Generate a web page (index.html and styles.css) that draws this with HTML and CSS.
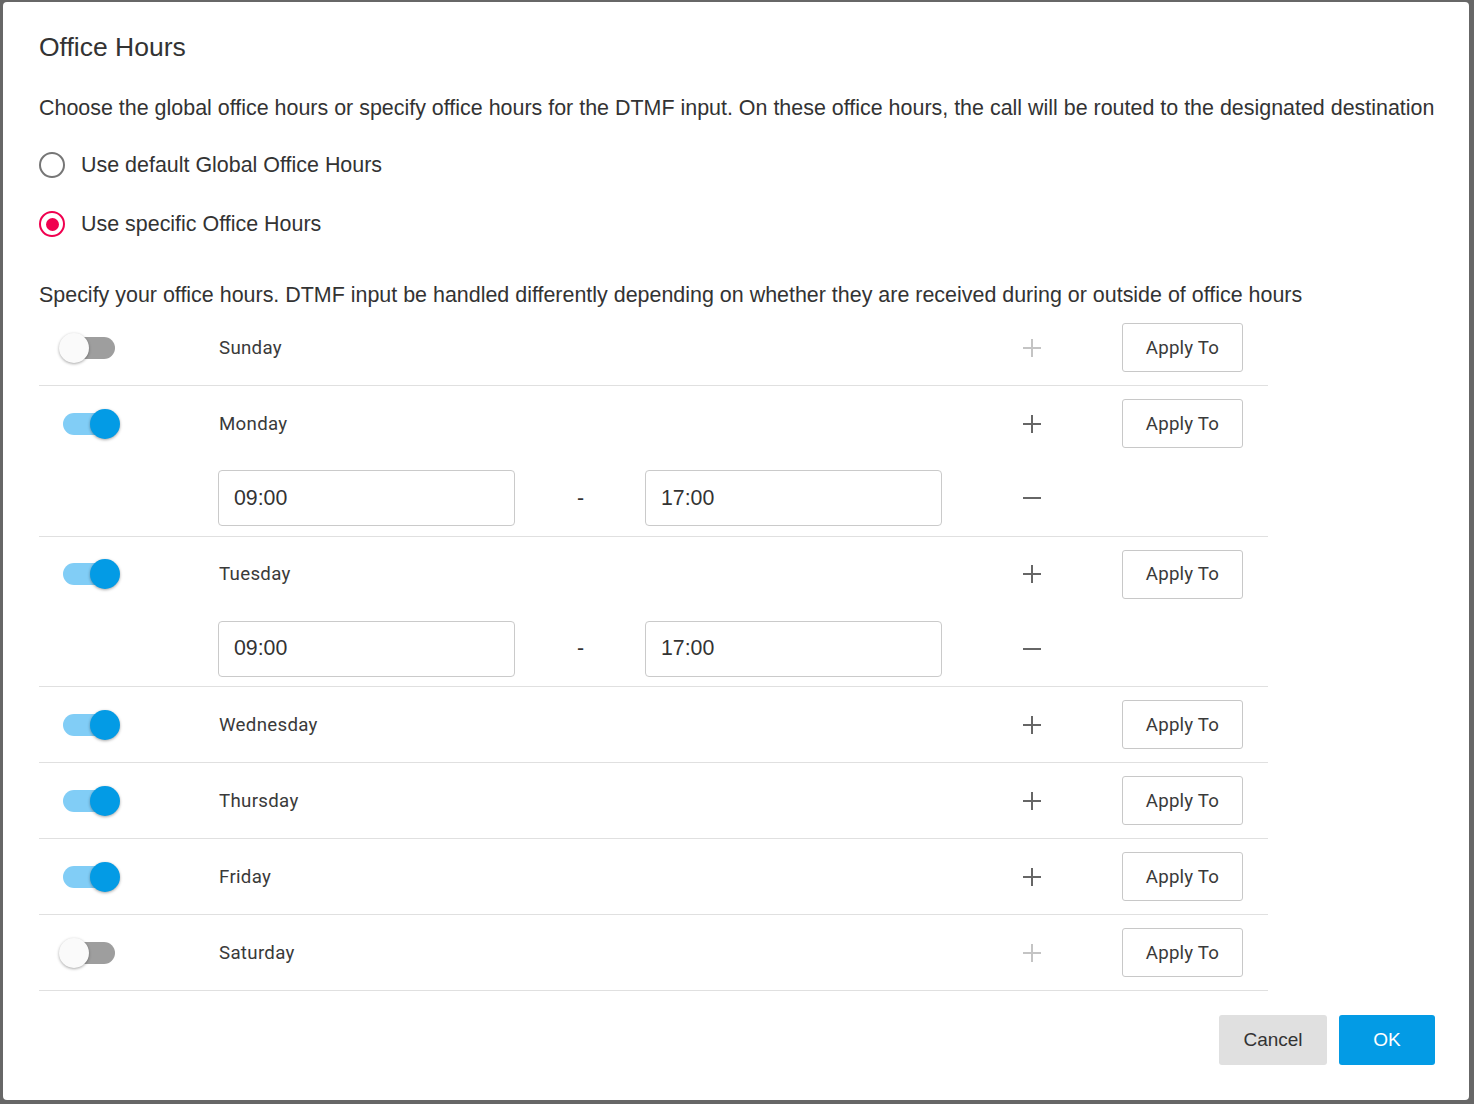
FILE: index.html
```html
<!DOCTYPE html>
<html>
<head>
<meta charset="utf-8">
<title>Office Hours</title>
<link rel="stylesheet" href="styles.css">
</head>
<body>
<div class="dialog">
  <h1 class="title">Office Hours</h1>
  <p class="desc">Choose the global office hours or specify office hours for the DTMF input. On these office hours, the call will be routed to the designated destination</p>
  <div class="radios">
    <label class="radio"><span class="radio-circle"></span><span>Use default Global Office Hours</span></label>
    <label class="radio checked"><span class="radio-circle"></span><span>Use specific Office Hours</span></label>
  </div>
  <p class="desc specify">Specify your office hours. DTMF input be handled differently depending on whether they are received during or outside of office hours</p>

  <div class="days">
    <div class="day">
      <div class="day-row">
        <span class="toggle"><span class="thumb"></span></span>
        <span class="day-name">Sunday</span>
        <span class="icon-cell"><svg class="plus disabled" viewBox="0 0 20 20"><path d="M10 1v18M1 10h18"/></svg></span>
        <button class="apply">Apply To</button>
      </div>
    </div>
    <div class="day">
      <div class="day-row">
        <span class="toggle on"><span class="thumb"></span></span>
        <span class="day-name">Monday</span>
        <span class="icon-cell"><svg class="plus" viewBox="0 0 20 20"><path d="M10 1v18M1 10h18"/></svg></span>
        <button class="apply">Apply To</button>
      </div>
      <div class="time-row">
        <input class="time" value="09:00">
        <span class="dash">-</span>
        <input class="time" value="17:00">
        <span class="icon-cell"><svg class="plus" viewBox="0 0 20 20"><path d="M1 10h18"/></svg></span>
      </div>
    </div>
    <div class="day">
      <div class="day-row">
        <span class="toggle on"><span class="thumb"></span></span>
        <span class="day-name">Tuesday</span>
        <span class="icon-cell"><svg class="plus" viewBox="0 0 20 20"><path d="M10 1v18M1 10h18"/></svg></span>
        <button class="apply">Apply To</button>
      </div>
      <div class="time-row">
        <input class="time" value="09:00">
        <span class="dash">-</span>
        <input class="time" value="17:00">
        <span class="icon-cell"><svg class="plus" viewBox="0 0 20 20"><path d="M1 10h18"/></svg></span>
      </div>
    </div>
    <div class="day">
      <div class="day-row">
        <span class="toggle on"><span class="thumb"></span></span>
        <span class="day-name">Wednesday</span>
        <span class="icon-cell"><svg class="plus" viewBox="0 0 20 20"><path d="M10 1v18M1 10h18"/></svg></span>
        <button class="apply">Apply To</button>
      </div>
    </div>
    <div class="day">
      <div class="day-row">
        <span class="toggle on"><span class="thumb"></span></span>
        <span class="day-name">Thursday</span>
        <span class="icon-cell"><svg class="plus" viewBox="0 0 20 20"><path d="M10 1v18M1 10h18"/></svg></span>
        <button class="apply">Apply To</button>
      </div>
    </div>
    <div class="day">
      <div class="day-row">
        <span class="toggle on"><span class="thumb"></span></span>
        <span class="day-name">Friday</span>
        <span class="icon-cell"><svg class="plus" viewBox="0 0 20 20"><path d="M10 1v18M1 10h18"/></svg></span>
        <button class="apply">Apply To</button>
      </div>
    </div>
    <div class="day">
      <div class="day-row">
        <span class="toggle"><span class="thumb"></span></span>
        <span class="day-name">Saturday</span>
        <span class="icon-cell"><svg class="plus disabled" viewBox="0 0 20 20"><path d="M10 1v18M1 10h18"/></svg></span>
        <button class="apply">Apply To</button>
      </div>
    </div>
  </div>

  <div class="footer">
    <button class="btn cancel">Cancel</button>
    <button class="btn ok">OK</button>
  </div>
</div>
</body>
</html>
```
FILE: styles.css
```css
html, body {
  margin: 0;
  padding: 0;
}
body {
  background: #676767;
  font-family: "Liberation Sans", Arial, sans-serif;
  color: #333;
  padding: 2px 5px 4px 3px;
  height: 1104px;
  box-sizing: border-box;
  overflow: hidden;
}
.dialog {
  background: #fff;
  border-radius: 4px;
  height: 1098px;
  box-sizing: border-box;
  padding: 29px 34px 0 36px;
  display: flex;
  flex-direction: column;
}
.title {
  margin: 0;
  font-size: 26.5px;
  font-weight: normal;
  line-height: 32px;
  color: #333;
}
.desc {
  margin: 30px 0 0;
  font-size: 21.45px;
  line-height: 30px;
  white-space: nowrap;
}
.radios {
  margin-top: 22px;
  display: flex;
  flex-direction: column;
  gap: 19px;
}
.radio {
  display: flex;
  align-items: center;
  height: 40px;
  font-size: 21.45px;
  gap: 16px;
}
.radio-circle {
  width: 26px;
  height: 26px;
  box-sizing: border-box;
  border: 2.5px solid #767676;
  border-radius: 50%;
  display: flex;
  align-items: center;
  justify-content: center;
}
.radio.checked .radio-circle {
  border-color: #f0004f;
}
.radio.checked .radio-circle::after {
  content: "";
  width: 13px;
  height: 13px;
  border-radius: 50%;
  background: #f0004f;
}
.specify {
  margin-top: 36px;
}
.days {
  width: 1229px;
}
.day {
  border-bottom: 1px solid #e0e0e0;
}
.day-row, .time-row {
  display: grid;
  grid-template-columns: 179px 297px 130px 297px 180px 121px 25px;
  align-items: center;
  height: 75px;
}
.time-row {
  height: 74.5px;
}
.toggle {
  grid-column: 1;
  position: relative;
  width: 52px;
  height: 22px;
  border-radius: 11px;
  background: #9e9e9e;
  margin-left: 24px;
}
.toggle .thumb {
  position: absolute;
  top: -4px;
  left: -4px;
  width: 30px;
  height: 30px;
  border-radius: 50%;
  background: #fafafa;
  box-shadow: 0 1px 3px rgba(0,0,0,0.35);
}
.toggle.on {
  background: #81cdf6;
}
.toggle.on .thumb {
  left: 27px;
  background: #039be5;
}
.day-name {
  grid-column: 2 / 5;
  font-family: Roboto, "Liberation Sans", sans-serif;
  font-size: 18.7px;
  letter-spacing: 0.3px;
  color: #3a3a3a;
  padding-left: 1px;
}
.icon-cell {
  grid-column: 5;
  display: flex;
  justify-content: center;
  align-items: center;
}
.plus {
  width: 20px;
  height: 20px;
  stroke: #666;
  stroke-width: 2;
  fill: none;
}
.plus.disabled {
  stroke: #c4c4c4;
}
.apply {
  grid-column: 6;
  height: 49px;
  box-sizing: border-box;
  border: 1px solid #c8c8c8;
  border-radius: 3px;
  background: #fff;
  font-family: Roboto, "Liberation Sans", sans-serif;
  font-size: 18.7px;
  letter-spacing: 0.2px;
  color: #3a3a3a;
  padding: 0;
}
.time {
  height: 56px;
  box-sizing: border-box;
  border: 1px solid #cacaca;
  border-radius: 4px;
  padding: 0 15px;
  font-family: "Liberation Sans", Arial, sans-serif;
  font-size: 21.3px;
  color: #333;
  width: 297px;
  outline: none;
}
.time-row .time:first-child {
  grid-column: 2;
}
.dash {
  grid-column: 3;
  text-align: center;
  font-size: 21.3px;
  padding-left: 1px;
}
.footer {
  margin-top: 24px;
  display: flex;
  justify-content: flex-end;
  gap: 12px;
}
.btn {
  height: 50px;
  border: none;
  border-radius: 3px;
  font-family: "Liberation Sans", Arial, sans-serif;
  font-size: 19px;
  padding: 0;
}
.cancel {
  width: 108px;
  background: #e0e0e0;
  color: #333;
}
.ok {
  width: 96px;
  background: #039be5;
  color: #fff;
}
```
